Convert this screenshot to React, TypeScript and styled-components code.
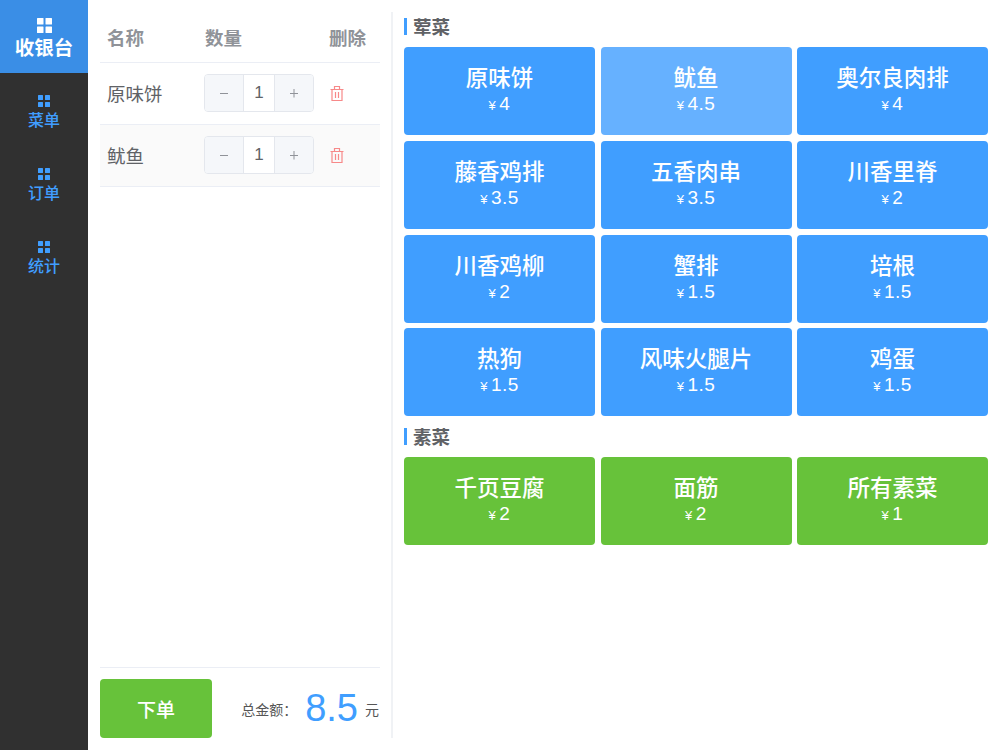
import styled, { createGlobalStyle } from 'styled-components';

interface Good {
  name: string;
  price: number;
  hover?: boolean;
}

const meatGoods: Good[] = [
  { name: '原味饼', price: 4 },
  { name: '鱿鱼', price: 4.5, hover: true },
  { name: '奥尔良肉排', price: 4 },
  { name: '藤香鸡排', price: 3.5 },
  { name: '五香肉串', price: 3.5 },
  { name: '川香里脊', price: 2 },
  { name: '川香鸡柳', price: 2 },
  { name: '蟹排', price: 1.5 },
  { name: '培根', price: 1.5 },
  { name: '热狗', price: 1.5 },
  { name: '风味火腿片', price: 1.5 },
  { name: '鸡蛋', price: 1.5 },
];

const vegGoods: Good[] = [
  { name: '千页豆腐', price: 2 },
  { name: '面筋', price: 2 },
  { name: '所有素菜', price: 1 },
];

const GlobalStyle = createGlobalStyle`
  html, body {
    margin: 0;
    padding: 0;
    background: #fff;
  }
  body {
    font-family: "Liberation Sans", "Noto Sans CJK SC", sans-serif;
  }
  * {
    box-sizing: border-box;
  }
`;

const Page = styled.div`
  display: flex;
  width: 1000px;
  height: 750px;
  overflow: hidden;
`;

const Sidebar = styled.nav`
  width: 88px;
  flex-shrink: 0;
  background: #303030;
  display: flex;
  flex-direction: column;
`;

const NavItem = styled.div<{ $active?: boolean }>`
  display: flex;
  flex-direction: column;
  align-items: center;
  height: 73px;
  padding-top: ${(p) => (p.$active ? '18px' : '22px')};
  background: ${(p) => (p.$active ? '#3a8ee6' : 'transparent')};
  color: ${(p) => (p.$active ? '#fff' : '#409eff')};
  font-size: ${(p) => (p.$active ? '19.5px' : '16px')};
  font-weight: ${(p) => (p.$active ? 600 : 500)};
  line-height: ${(p) => (p.$active ? '31px' : '27px')};
`;

const Grid = styled.svg`
  display: block;
  flex-shrink: 0;
  fill: currentColor;
`;

const Content = styled.main`
  flex: 1;
  display: flex;
  padding: 12px;
`;

const OrderPane = styled.section`
  width: 293px;
  flex-shrink: 0;
  padding-right: 11px;
  border-right: 2px solid #f0f2f5;
  display: flex;
  flex-direction: column;
`;

const TableHead = styled.div`
  display: grid;
  grid-template-columns: 98px 124px 1fr;
  align-items: center;
  height: 51px;
  padding: 0 7px;
  border-bottom: 1px solid #ebeef5;
  color: #909399;
  font-size: 18.5px;
  font-weight: 700;
`;

const Row = styled.div<{ $striped?: boolean }>`
  display: grid;
  grid-template-columns: 98px 124px 1fr;
  align-items: center;
  height: 62px;
  padding: 0 7px 1px;
  border-bottom: 1px solid #ebeef5;
  background: ${(p) => (p.$striped ? '#fafafa' : '#fff')};
  color: #606266;
  font-size: 18.5px;
`;

const Stepper = styled.div`
  display: flex;
  width: 110px;
  height: 38px;
  margin-left: -1px;
  border: 1px solid #e4e7ed;
  border-radius: 4px;
  overflow: hidden;
  background: #fff;
`;

const StepButton = styled.div`
  width: 38px;
  display: flex;
  align-items: center;
  justify-content: center;
  background: #f5f7fa;
  color: #909399;
`;

const StepValue = styled.div`
  flex: 1;
  display: flex;
  align-items: center;
  justify-content: center;
  border-left: 1px solid #e4e7ed;
  border-right: 1px solid #e4e7ed;
  color: #606266;
  font-size: 17px;
`;

const TrashWrap = styled.div`
  display: flex;
  color: #f78989;
  padding-left: 1px;
`;

const Spacer = styled.div`
  flex: 1;
`;

const Footer = styled.div`
  display: flex;
  align-items: center;
  justify-content: space-between;
  height: 71px;
  padding-top: 11px;
  border-top: 1px solid #ebeef5;
`;

const SubmitButton = styled.div`
  width: 112px;
  height: 59px;
  display: flex;
  align-items: center;
  justify-content: center;
  background: #67c23a;
  border-radius: 4px;
  color: #fff;
  font-size: 19px;
  font-weight: 500;
`;

const Total = styled.div`
  display: flex;
  align-items: center;
  padding-right: 1px;
  color: #555;
  font-size: 14px;
`;

const Amount = styled.span`
  color: #409eff;
  font-size: 38px;
  margin: 0 7px 0 8px;
`;

const GoodsPane = styled.section`
  flex: 1;
  padding-left: 11px;
  display: flex;
  flex-direction: column;
`;

const GroupTitle = styled.h3`
  margin: 0;
  height: 30px;
  padding-top: 6px;
  display: flex;
  align-items: flex-start;
  gap: 6px;
  color: #606266;
  font-size: 18.5px;
  line-height: 20px;
  font-weight: 700;

  &::before {
    content: '';
    width: 3px;
    height: 17px;
    background: #409eff;
  }
`;

const GoodsGrid = styled.div`
  display: grid;
  grid-template-columns: 191px 191px 191px;
  grid-auto-rows: 88px;
  gap: 5.8px 5.5px;
  margin: 5px 0 6px;
`;

const GoodCard = styled.div<{ $veg?: boolean; $hover?: boolean }>`
  display: flex;
  flex-direction: column;
  align-items: center;
  padding-top: 18px;
  border-radius: 4px;
  color: #fff;
  background: ${(p) => (p.$veg ? '#67c23a' : p.$hover ? '#66b1ff' : '#409eff')};
`;

const GoodName = styled.div`
  font-size: 22.5px;
  line-height: 28px;
  font-weight: 500;
`;

const GoodPrice = styled.div`
  font-size: 19px;
  line-height: 22px;
  letter-spacing: 0.5px;
  display: flex;
  align-items: baseline;
`;

const Yen = styled.span`
  font-size: 13px;
  margin-right: 3px;
`;

function GridIcon({ size, gap }: { size: number; gap: number }) {
  const cell = (size - gap) / 2;
  const far = cell + gap;
  return (
    <Grid width={size} height={size} viewBox={`0 0 ${size} ${size}`}>
      <rect width={cell} height={cell} rx="0.5" />
      <rect x={far} width={cell} height={cell} rx="0.5" />
      <rect y={far} width={cell} height={cell} rx="0.5" />
      <rect x={far} y={far} width={cell} height={cell} rx="0.5" />
    </Grid>
  );
}

function TrashIcon() {
  return (
    <svg width="14" height="15" viewBox="0 0 14 15" fill="none" stroke="currentColor" strokeWidth="1.2">
      <path d="M0.5 3.5h13M2 3.5v11h10v-11M4.5 3.5V0.5h5v3M5.5 6v6M8.5 6v6" />
    </svg>
  );
}

function OrderRow({ name, striped }: { name: string; striped?: boolean }) {
  return (
    <Row $striped={striped}>
      <span>{name}</span>
      <Stepper>
        <StepButton>
          <svg width="10" height="10" viewBox="0 0 10 10" stroke="currentColor" strokeWidth="1">
            <path d="M1 5.5h8" />
          </svg>
        </StepButton>
        <StepValue>1</StepValue>
        <StepButton>
          <svg width="10" height="10" viewBox="0 0 10 10" stroke="currentColor" strokeWidth="1">
            <path d="M1 5.5h8M5 1v8.5" />
          </svg>
        </StepButton>
      </Stepper>
      <TrashWrap>
        <TrashIcon />
      </TrashWrap>
    </Row>
  );
}

function GoodItem({ good, veg }: { good: Good; veg?: boolean }) {
  return (
    <GoodCard $veg={veg} $hover={good.hover}>
      <GoodName>{good.name}</GoodName>
      <GoodPrice>
        <Yen>¥</Yen>
        {good.price}
      </GoodPrice>
    </GoodCard>
  );
}

function App() {
  return (
    <Page>
      <GlobalStyle />
      <Sidebar>
        <NavItem $active>
          <GridIcon size={15} gap={2} />
          收银台
        </NavItem>
        <NavItem>
          <GridIcon size={12} gap={2} />
          菜单
        </NavItem>
        <NavItem>
          <GridIcon size={12} gap={2} />
          订单
        </NavItem>
        <NavItem>
          <GridIcon size={12} gap={2} />
          统计
        </NavItem>
      </Sidebar>
      <Content>
        <OrderPane>
          <TableHead>
            <span>名称</span>
            <span>数量</span>
            <span>删除</span>
          </TableHead>
          <OrderRow name="原味饼" />
          <OrderRow name="鱿鱼" striped />
          <Spacer />
          <Footer>
            <SubmitButton>下单</SubmitButton>
            <Total>
              总金额：
              <Amount>8.5</Amount>元
            </Total>
          </Footer>
        </OrderPane>
        <GoodsPane>
          <GroupTitle>荤菜</GroupTitle>
          <GoodsGrid>
            {meatGoods.map((good) => (
              <GoodItem key={good.name} good={good} />
            ))}
          </GoodsGrid>
          <GroupTitle>素菜</GroupTitle>
          <GoodsGrid>
            {vegGoods.map((good) => (
              <GoodItem key={good.name} good={good} veg />
            ))}
          </GoodsGrid>
        </GoodsPane>
      </Content>
    </Page>
  );
}

export default App;
